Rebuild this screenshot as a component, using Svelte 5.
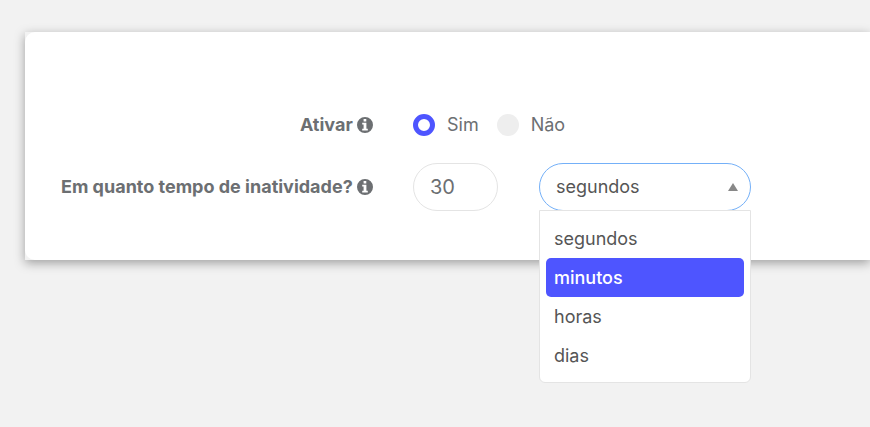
<script>
  const units = ['segundos', 'minutos', 'horas', 'dias'];

  let enabled = $state('sim');
  let amount = $state('30');
  let unit = $state('segundos');
  let highlighted = $state('minutos');
  let open = $state(true);

  function toggle(event) {
    event.preventDefault();
    open = !open;
    highlighted = unit;
  }

  function choose(value) {
    unit = value;
    open = false;
  }
</script>

{#snippet info()}
  <svg class="info" viewBox="0 0 16 16" aria-hidden="true">
    <path fill="currentColor" fill-rule="evenodd" d="M8 0a8 8 0 1 1 0 16A8 8 0 0 1 8 0ZM6.6 2v2.4h2.7V2ZM5.2 5.8v1.8h1.4v4.1H5.2v1.8h5.6v-1.8H9.4V5.8Z" />
  </svg>
{/snippet}

<main>
  <form class="card">
    <div class="fields">
      <span class="label" id="enabled-label">Ativar {@render info()}</span>
      <div class="radios" role="radiogroup" aria-labelledby="enabled-label">
        <label><input type="radio" name="enabled" value="sim" bind:group={enabled} />Sim</label>
        <label><input type="radio" name="enabled" value="nao" bind:group={enabled} />Não</label>
      </div>

      <label class="label" for="amount">Em quanto tempo de inatividade? {@render info()}</label>
      <div class="controls">
        <input class="amount" id="amount" type="text" inputmode="numeric" bind:value={amount} />
        <div class="unit" class:open>
          <select aria-label="Unidade de tempo" bind:value={unit} onmousedown={toggle}>
            {#each units as item (item)}
              <option value={item}>{item}</option>
            {/each}
          </select>
          <svg class="arrow" viewBox="0 0 10 8" aria-hidden="true"><path fill="#888" d="M5 0l5 8H0z" /></svg>
          {#if open}
            <div class="menu" role="listbox" aria-label="Unidades">
              {#each units as item (item)}
                <button
                  type="button"
                  role="option"
                  aria-selected={item === unit}
                  class:highlighted={item === highlighted}
                  onmouseenter={() => (highlighted = item)}
                  onclick={() => choose(item)}>{item}</button>
              {/each}
            </div>
          {/if}
        </div>
      </div>
    </div>
  </form>
</main>

<style>
  :global(body) { background: #f2f2f2; }

  main {
    box-sizing: border-box;
    min-height: 100vh;
    padding: 32px 0 32px 25px;
    background: #f2f2f2;
    font-family: Inter, "Liberation Sans", sans-serif;
    font-size: 18px;
    line-height: 24px;
    color: #6c6f72;
  }

  .card { background: #f2f2f2; box-shadow: 0 3px 10px rgba(0, 0, 0, 0.35); }

  .fields {
    display: grid;
    grid-template-columns: max-content 1fr;
    align-items: center;
    gap: 26px 40px;
    padding: 81px 36px 49px;
    border-radius: 10px 0 0 10px;
    background: #fff;
  }

  .label { text-align: right; font-weight: 700; }
  .info { width: 16px; height: 16px; vertical-align: -2px; }

  .radios { display: flex; gap: 18px; }
  .radios label { display: flex; align-items: center; gap: 12px; }
  .radios input {
    appearance: none;
    width: 22px;
    height: 22px;
    margin: 0;
    border-radius: 50%;
    background: #eee;
  }
  .radios input:checked { border: 5px solid #4e55ff; background: #fff; }

  .controls { display: flex; gap: 41px; }
  .amount, select {
    box-sizing: border-box;
    height: 48px;
    padding: 0 16px;
    border: 1px solid #e4e4e4;
    border-radius: 24px;
    background: #fff;
    font: inherit;
  }
  .amount { width: 85px; font-size: 20px; color: #6c6f72; }

  .unit { position: relative; width: 212px; color: #555; }
  select { appearance: none; display: block; width: 100%; color: inherit; }
  .open select { border-color: #74b0f8; }
  .arrow {
    position: absolute;
    top: 20px;
    right: 13px;
    width: 10px;
    height: 8px;
    pointer-events: none;
  }
  .unit:not(.open) .arrow { transform: rotate(180deg); }

  .menu {
    position: absolute;
    top: 47px;
    left: 0;
    right: 0;
    z-index: 1;
    display: flex;
    flex-direction: column;
    padding: 8px 6px 7px;
    border: 1px solid #e4e4e4;
    border-radius: 0 0 6px 6px;
    background: #fff;
  }
  .menu button {
    padding: 8px 8px 7px;
    border: 0;
    border-radius: 5px;
    background: none;
    font: inherit;
    line-height: 24px;
    text-align: left;
    color: inherit;
  }
  .menu .highlighted { background: #4e55ff; color: #fff; font-weight: 500; }
</style>
